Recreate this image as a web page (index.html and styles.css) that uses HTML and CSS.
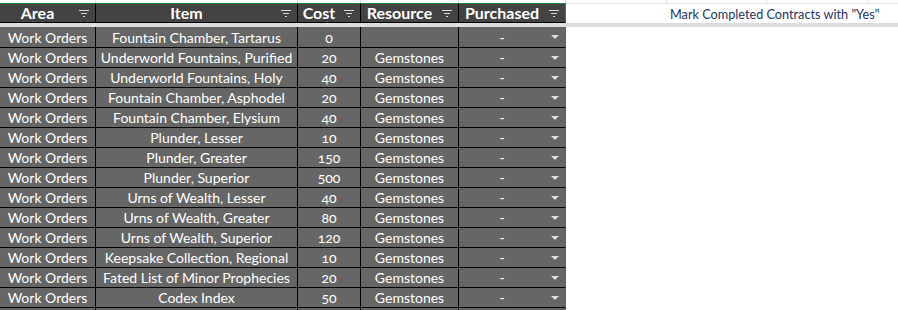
FILE: index.html
```html
<!DOCTYPE html>
<html>
<head>
<meta charset="utf-8">
<link rel="stylesheet" href="styles.css">
</head>
<body>
<div class="sheet">
  <div class="strip">
    <div class="sc c1"></div><div class="sc c2"></div><div class="sc c3"></div><div class="sc c4"></div><div class="sc c5"></div>
    <div class="sc s1"></div><div class="sc s2"></div><div class="sc s3"></div><div class="sc s4"></div>
  </div>
  <div class="row head">
    <div class="hc c1"><span class="ht">Area</span><svg class="fi" width="10" height="7" viewBox="0 0 10 7"><rect x="0" y="0" width="10" height="1"/><rect x="2" y="3" width="6" height="1"/><rect x="4" y="6" width="2" height="1"/></svg></div>
    <div class="hc c2"><span class="ht">Item</span><svg class="fi" width="10" height="7" viewBox="0 0 10 7"><rect x="0" y="0" width="10" height="1"/><rect x="2" y="3" width="6" height="1"/><rect x="4" y="6" width="2" height="1"/></svg></div>
    <div class="hc c3"><span class="ht">Cost</span><svg class="fi" width="10" height="7" viewBox="0 0 10 7"><rect x="0" y="0" width="10" height="1"/><rect x="2" y="3" width="6" height="1"/><rect x="4" y="6" width="2" height="1"/></svg></div>
    <div class="hc c4"><span class="ht">Resource</span><svg class="fi" width="10" height="7" viewBox="0 0 10 7"><rect x="0" y="0" width="10" height="1"/><rect x="2" y="3" width="6" height="1"/><rect x="4" y="6" width="2" height="1"/></svg></div>
    <div class="hc c5"><span class="ht">Purchased</span><svg class="fi" width="10" height="7" viewBox="0 0 10 7"><rect x="0" y="0" width="10" height="1"/><rect x="2" y="3" width="6" height="1"/><rect x="4" y="6" width="2" height="1"/></svg></div>
    <div class="side">
      <div class="sidecell"></div>
      <div class="sidecell note">Mark Completed Contracts with "Yes"</div>
    </div>
  </div>
  <div class="band"></div>
  <div class="body">
    <div class="row data first"><div class="dc c1">Work Orders</div><div class="dc c2">Fountain Chamber, Tartarus</div><div class="dc c3">0</div><div class="dc c4"></div><div class="dc c5"><span class="dash">-</span><svg class="dd" width="8" height="4" viewBox="0 0 8 4"><polygon points="0,0 8,0 4,4"/></svg></div><div class="blank"></div></div>
    <div class="row data"><div class="dc c1">Work Orders</div><div class="dc c2">Underworld Fountains, Purified</div><div class="dc c3">20</div><div class="dc c4">Gemstones</div><div class="dc c5"><span class="dash">-</span><svg class="dd" width="8" height="4" viewBox="0 0 8 4"><polygon points="0,0 8,0 4,4"/></svg></div><div class="blank"></div></div>
    <div class="row data"><div class="dc c1">Work Orders</div><div class="dc c2">Underworld Fountains, Holy</div><div class="dc c3">40</div><div class="dc c4">Gemstones</div><div class="dc c5"><span class="dash">-</span><svg class="dd" width="8" height="4" viewBox="0 0 8 4"><polygon points="0,0 8,0 4,4"/></svg></div><div class="blank"></div></div>
    <div class="row data"><div class="dc c1">Work Orders</div><div class="dc c2">Fountain Chamber, Asphodel</div><div class="dc c3">20</div><div class="dc c4">Gemstones</div><div class="dc c5"><span class="dash">-</span><svg class="dd" width="8" height="4" viewBox="0 0 8 4"><polygon points="0,0 8,0 4,4"/></svg></div><div class="blank"></div></div>
    <div class="row data"><div class="dc c1">Work Orders</div><div class="dc c2">Fountain Chamber, Elysium</div><div class="dc c3">40</div><div class="dc c4">Gemstones</div><div class="dc c5"><span class="dash">-</span><svg class="dd" width="8" height="4" viewBox="0 0 8 4"><polygon points="0,0 8,0 4,4"/></svg></div><div class="blank"></div></div>
    <div class="row data"><div class="dc c1">Work Orders</div><div class="dc c2">Plunder, Lesser</div><div class="dc c3">10</div><div class="dc c4">Gemstones</div><div class="dc c5"><span class="dash">-</span><svg class="dd" width="8" height="4" viewBox="0 0 8 4"><polygon points="0,0 8,0 4,4"/></svg></div><div class="blank"></div></div>
    <div class="row data"><div class="dc c1">Work Orders</div><div class="dc c2">Plunder, Greater</div><div class="dc c3">150</div><div class="dc c4">Gemstones</div><div class="dc c5"><span class="dash">-</span><svg class="dd" width="8" height="4" viewBox="0 0 8 4"><polygon points="0,0 8,0 4,4"/></svg></div><div class="blank"></div></div>
    <div class="row data"><div class="dc c1">Work Orders</div><div class="dc c2">Plunder, Superior</div><div class="dc c3">500</div><div class="dc c4">Gemstones</div><div class="dc c5"><span class="dash">-</span><svg class="dd" width="8" height="4" viewBox="0 0 8 4"><polygon points="0,0 8,0 4,4"/></svg></div><div class="blank"></div></div>
    <div class="row data"><div class="dc c1">Work Orders</div><div class="dc c2">Urns of Wealth, Lesser</div><div class="dc c3">40</div><div class="dc c4">Gemstones</div><div class="dc c5"><span class="dash">-</span><svg class="dd" width="8" height="4" viewBox="0 0 8 4"><polygon points="0,0 8,0 4,4"/></svg></div><div class="blank"></div></div>
    <div class="row data"><div class="dc c1">Work Orders</div><div class="dc c2">Urns of Wealth, Greater</div><div class="dc c3">80</div><div class="dc c4">Gemstones</div><div class="dc c5"><span class="dash">-</span><svg class="dd" width="8" height="4" viewBox="0 0 8 4"><polygon points="0,0 8,0 4,4"/></svg></div><div class="blank"></div></div>
    <div class="row data"><div class="dc c1">Work Orders</div><div class="dc c2">Urns of Wealth, Superior</div><div class="dc c3">120</div><div class="dc c4">Gemstones</div><div class="dc c5"><span class="dash">-</span><svg class="dd" width="8" height="4" viewBox="0 0 8 4"><polygon points="0,0 8,0 4,4"/></svg></div><div class="blank"></div></div>
    <div class="row data"><div class="dc c1">Work Orders</div><div class="dc c2">Keepsake Collection, Regional</div><div class="dc c3">10</div><div class="dc c4">Gemstones</div><div class="dc c5"><span class="dash">-</span><svg class="dd" width="8" height="4" viewBox="0 0 8 4"><polygon points="0,0 8,0 4,4"/></svg></div><div class="blank"></div></div>
    <div class="row data"><div class="dc c1">Work Orders</div><div class="dc c2">Fated List of Minor Prophecies</div><div class="dc c3">20</div><div class="dc c4">Gemstones</div><div class="dc c5"><span class="dash">-</span><svg class="dd" width="8" height="4" viewBox="0 0 8 4"><polygon points="0,0 8,0 4,4"/></svg></div><div class="blank"></div></div>
    <div class="row data"><div class="dc c1">Work Orders</div><div class="dc c2">Codex Index</div><div class="dc c3">50</div><div class="dc c4">Gemstones</div><div class="dc c5"><span class="dash">-</span><svg class="dd" width="8" height="4" viewBox="0 0 8 4"><polygon points="0,0 8,0 4,4"/></svg></div><div class="blank"></div></div>
    <div class="row data"><div class="dc c1"></div><div class="dc c2"></div><div class="dc c3"></div><div class="dc c4"></div><div class="dc c5"></div><div class="blank"></div></div>
  </div>
</div>
</body>
</html>
```
FILE: styles.css
```css
html, body {
  margin: 0;
  padding: 0;
  background: #ffffff;
}
.sheet {
  width: 898px;
  height: 310px;
  overflow: hidden;
  font-family: "Lato", "Liberation Sans", sans-serif;
  font-variant-numeric: oldstyle-nums;
}
.strip {
  display: grid;
  grid-template-columns: 96px 202px 63px 98px 107px 101px 100px 101px 1fr;
  height: 3px;
}
.sc {
  box-sizing: border-box;
  border-right: 1px solid #e2e3e3;
}
.strip .s4 { border-right: none; }
.row {
  display: grid;
  grid-template-columns: 96px 202px 63px 98px 107px 1fr;
}
.head {
  height: 20px;
}
.hc {
  box-sizing: border-box;
  height: 20px;
  background: #434343;
  border-top: 1px solid #1e8e3e;
  border-right: 1px solid #000000;
  border-bottom: 1px solid #000000;
  display: flex;
  align-items: center;
  color: #ffffff;
  font-weight: 700;
  font-size: 16px;
  line-height: 18px;
}
.hc.c5 { border-right-color: #1e8e3e; }
.ht {
  flex: 1;
  text-align: center;
  padding-right: 4px;
  white-space: nowrap;
}
.fi {
  fill: #d9d9d9;
  margin-right: 6px;
  flex: none;
}
.side {
  display: grid;
  grid-template-columns: 101px 1fr;
  border-top: 1px solid #e2e3e3;
  box-sizing: border-box;
  height: 20px;
}
.sidecell {
  box-sizing: border-box;
  height: 19px;
}
.note {
  color: #26365f;
  font-size: 12.7px;
  line-height: 20px;
  padding-left: 3px;
  white-space: nowrap;
  font-variant-numeric: normal;
}
.band {
  height: 4px;
  background: #dadce0;
}
.data {
  height: 20px;
}
.data.first {
  height: 21px;
}
.dc {
  box-sizing: border-box;
  background: #666666;
  border-right: 1px solid #000000;
  border-bottom: 1px solid #000000;
  color: #ffffff;
  font-size: 14px;
  display: flex;
  align-items: center;
  justify-content: center;
  white-space: nowrap;
  overflow: hidden;
}
.dc.c5 {
  border-right-color: #1e8e3e;
}
.dash {
  flex: 1;
  text-align: center;
  padding-right: 6px;
}
.dd {
  fill: #dddddd;
  margin-right: 6px;
  flex: none;
}
.blank {
  background: #ffffff;
}
```
